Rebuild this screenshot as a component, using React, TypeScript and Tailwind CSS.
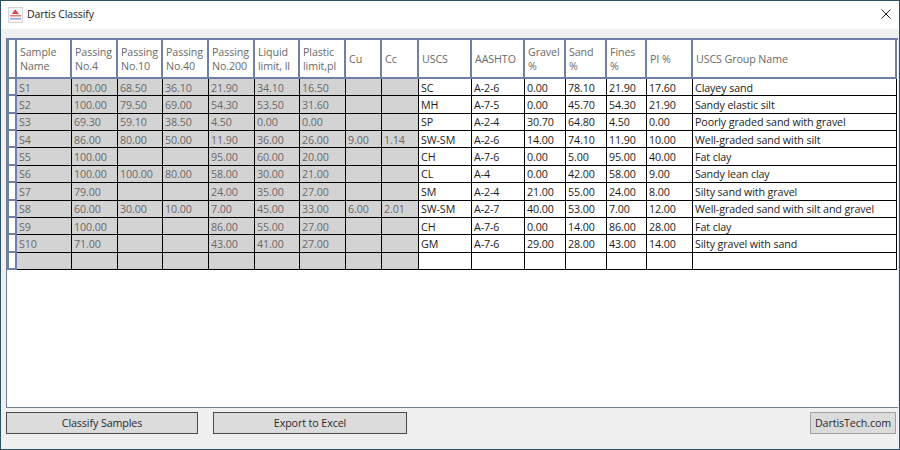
const COLS = [55, 46, 45, 46, 46, 45, 46, 36, 37, 53, 53, 41, 41, 40, 46, 204];

const HEADERS = [
  ['Sample', 'Name'],
  ['Passing', 'No.4'],
  ['Passing', 'No.10'],
  ['Passing', 'No.40'],
  ['Passing', 'No.200'],
  ['Liquid', 'limit, ll'],
  ['Plastic', 'limit,pl'],
  ['Cu'],
  ['Cc'],
  ['USCS'],
  ['AASHTO'],
  ['Gravel', '%'],
  ['Sand', '%'],
  ['Fines', '%'],
  ['PI %'],
  ['USCS Group Name'],
];

const ROWS = [
  ['S1', '100.00', '68.50', '36.10', '21.90', '34.10', '16.50', '', '', 'SC', 'A-2-6', '0.00', '78.10', '21.90', '17.60', 'Clayey sand'],
  ['S2', '100.00', '79.50', '69.00', '54.30', '53.50', '31.60', '', '', 'MH', 'A-7-5', '0.00', '45.70', '54.30', '21.90', 'Sandy elastic silt'],
  ['S3', '69.30', '59.10', '38.50', '4.50', '0.00', '0.00', '', '', 'SP', 'A-2-4', '30.70', '64.80', '4.50', '0.00', 'Poorly graded sand with gravel'],
  ['S4', '86.00', '80.00', '50.00', '11.90', '36.00', '26.00', '9.00', '1.14', 'SW-SM', 'A-2-6', '14.00', '74.10', '11.90', '10.00', 'Well-graded sand with silt'],
  ['S5', '100.00', '', '', '95.00', '60.00', '20.00', '', '', 'CH', 'A-7-6', '0.00', '5.00', '95.00', '40.00', 'Fat clay'],
  ['S6', '100.00', '100.00', '80.00', '58.00', '30.00', '21.00', '', '', 'CL', 'A-4', '0.00', '42.00', '58.00', '9.00', 'Sandy lean clay'],
  ['S7', '79.00', '', '', '24.00', '35.00', '27.00', '', '', 'SM', 'A-2-4', '21.00', '55.00', '24.00', '8.00', 'Silty sand with gravel'],
  ['S8', '60.00', '30.00', '10.00', '7.00', '45.00', '33.00', '6.00', '2.01', 'SW-SM', 'A-2-7', '40.00', '53.00', '7.00', '12.00', 'Well-graded sand with silt and gravel'],
  ['S9', '100.00', '', '', '86.00', '55.00', '27.00', '', '', 'CH', 'A-7-6', '0.00', '14.00', '86.00', '28.00', 'Fat clay'],
  ['S10', '71.00', '', '', '43.00', '41.00', '27.00', '', '', 'GM', 'A-7-6', '29.00', '28.00', '43.00', '14.00', 'Silty gravel with sand'],
  ['', '', '', '', '', '', '', '', '', '', '', '', '', '', '', ''],
];

function AppIcon() {
  return (
    <svg width="15" height="16" viewBox="0 0 15 16" className="shrink-0">
      <rect x="0.5" y="0.5" width="14" height="15" fill="#f8f6f6" stroke="#d4d4da" />
      <path d="M4 7 C5 5 6.5 3 7.5 2.5 C8.5 4 10 6 11 7 Z" fill="#e0444c" />
      <rect x="2" y="8" width="11" height="1.5" fill="#e8777c" />
      <rect x="2" y="11" width="11" height="1.5" fill="#8fa6d6" />
    </svg>
  );
}

export default function App() {
  return (
    <div className="w-[900px] h-[450px] flex flex-col overflow-hidden bg-[#f0f0f0] border border-[#2f5166] font-['Open_Sans',sans-serif] text-[10.7px] tracking-[-0.1px]">
      <div className="h-[28px] shrink-0 bg-white flex items-center pl-[7px] pr-[7.5px] gap-[4px]">
        <AppIcon />
        <span className="text-[10.5px] text-[#1a1a1a]">Dartis Classify</span>
        <svg width="12" height="12" viewBox="0 0 12 12" className="ml-auto mb-[3px]" stroke="#222" strokeWidth="1" fill="none">
          <path d="M1.5 1.5 L10.5 10.5 M10.5 1.5 L1.5 10.5" />
        </svg>
      </div>

      <div className="flex-1 min-h-0 flex flex-col pl-[5px] pr-[1px]">
        <div className="mt-[9px] flex-1 min-h-0 bg-white border-l border-b border-[#6d8191]">
          <div className="flex h-[41px] border-t-2 border-[#6f7fa8]">
            <div className="w-[10px] shrink-0 bg-white border-x-2 border-b-2 border-[#6f7fa8]" />
            {HEADERS.map((lines, i) => (
              <div
                key={i}
                className="shrink-0 border-r-2 border-b-2 border-[#6f7fa8] bg-white flex flex-col justify-center pl-[3px] text-[#6a6a6a] leading-[14px] whitespace-nowrap overflow-hidden"
                style={{ width: COLS[i] }}
              >
                {lines.map((line) => (
                  <span key={line}>{line}</span>
                ))}
              </div>
            ))}
          </div>
          {ROWS.map((row, r) => (
            <div key={r} className="flex h-[17.36px]">
              <div className="w-[10px] shrink-0 bg-white border-x-2 border-b-2 border-[#6f7fa8]" />
              {row.map((cell, i) => (
                <div
                  key={i}
                  className={`shrink-0 border-r border-b border-black flex items-center pl-[2px] pt-[1px] whitespace-nowrap overflow-hidden ${
                    i < 9 ? 'bg-[#d3d3d3] text-[#6a6a6a]' : 'bg-white text-[#1c1c1c]'
                  }`}
                  style={{ width: COLS[i] }}
                >
                  {cell}
                </div>
              ))}
            </div>
          ))}
        </div>

        <div className="h-[41px] shrink-0 flex items-start pt-[4px] pr-[2px]">
          <button className="w-[192px] h-[22px] bg-[#dcdcdc] border border-[#4a4a4a] text-[#2a2a2a]">Classify Samples</button>
          <button className="w-[194px] h-[22px] ml-[15px] bg-[#dcdcdc] border border-[#4a4a4a] text-[#2a2a2a]">Export to Excel</button>
          <button className="w-[86px] h-[22px] ml-auto bg-[#dcdcdc] border border-[#a0a0a0] text-[#2a2a2a]">DartisTech.com</button>
        </div>
      </div>
    </div>
  );
}
